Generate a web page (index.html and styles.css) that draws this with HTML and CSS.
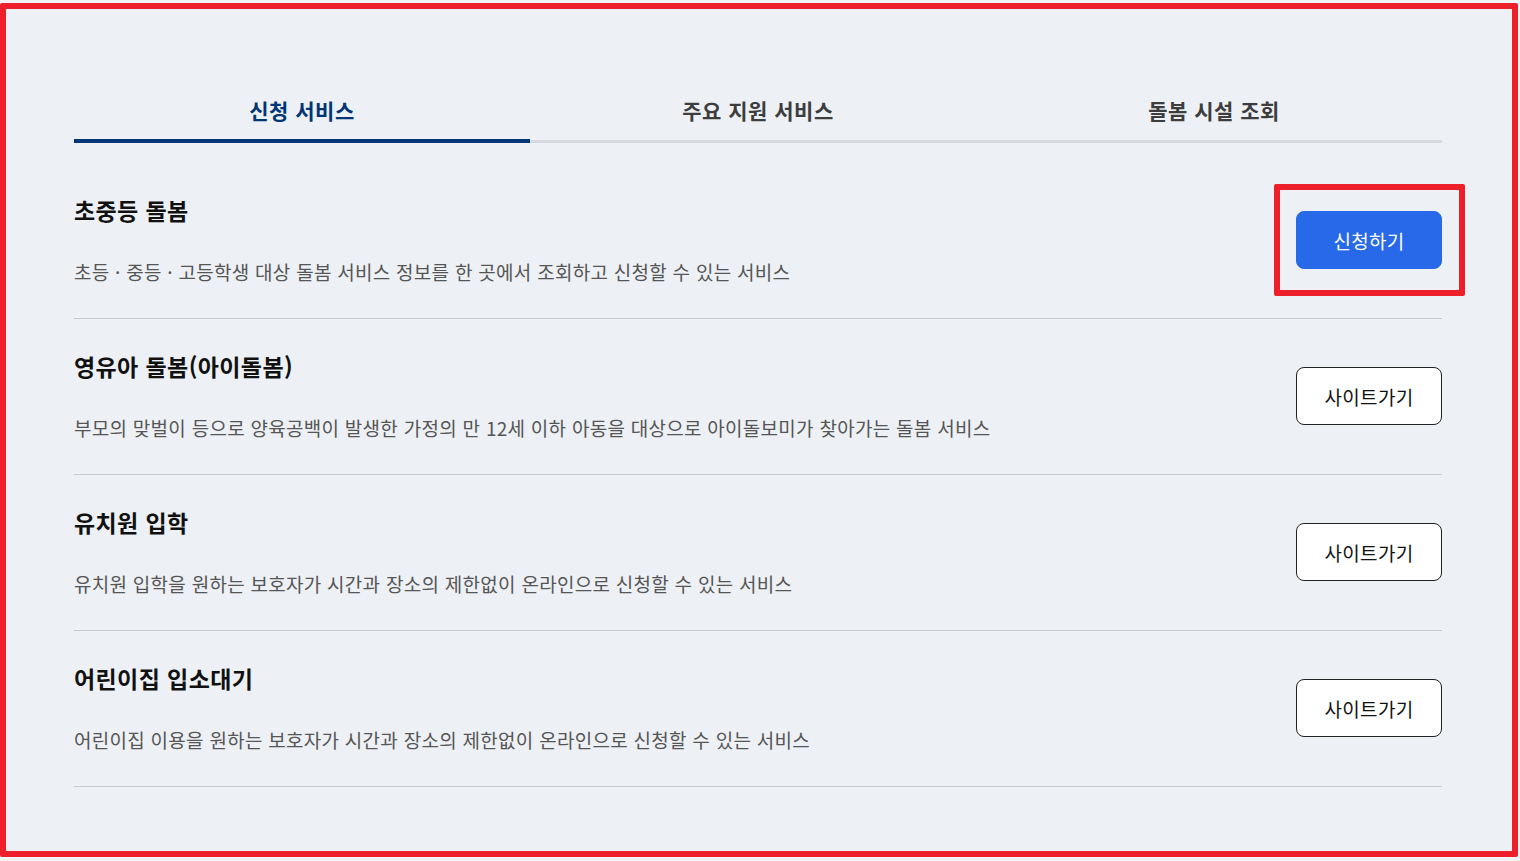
FILE: index.html
```html
<!DOCTYPE html>
<html lang="ko">
<head>
<meta charset="utf-8">
<title>돌봄 서비스</title>
<link rel="stylesheet" href="styles.css">
</head>
<body>
<div class="frame">
  <div class="content">
    <div class="tabs">
      <div class="tab active">신청 서비스</div>
      <div class="tab">주요 지원 서비스</div>
      <div class="tab">돌봄 시설 조회</div>
    </div>
    <ul class="list">
      <li class="item">
        <div class="info">
          <h3 class="title">초중등 돌봄</h3>
          <p class="desc">초등 · 중등 · 고등학생 대상 돌봄 서비스 정보를 한 곳에서 조회하고 신청할 수 있는 서비스</p>
        </div>
        <div class="btn-wrap">
          <a class="btn primary" href="#">신청하기</a>
          <span class="highlight"></span>
        </div>
      </li>
      <li class="item">
        <div class="info">
          <h3 class="title">영유아 돌봄(아이돌봄)</h3>
          <p class="desc">부모의 맞벌이 등으로 양육공백이 발생한 가정의 만 12세 이하 아동을 대상으로 아이돌보미가 찾아가는 돌봄 서비스</p>
        </div>
        <div class="btn-wrap"><a class="btn" href="#">사이트가기</a></div>
      </li>
      <li class="item">
        <div class="info">
          <h3 class="title">유치원 입학</h3>
          <p class="desc">유치원 입학을 원하는 보호자가 시간과 장소의 제한없이 온라인으로 신청할 수 있는 서비스</p>
        </div>
        <div class="btn-wrap"><a class="btn" href="#">사이트가기</a></div>
      </li>
      <li class="item">
        <div class="info">
          <h3 class="title">어린이집 입소대기</h3>
          <p class="desc">어린이집 이용을 원하는 보호자가 시간과 장소의 제한없이 온라인으로 신청할 수 있는 서비스</p>
        </div>
        <div class="btn-wrap"><a class="btn" href="#">사이트가기</a></div>
      </li>
    </ul>
  </div>
</div>
</body>
</html>
```

FILE: styles.css
```css
* { box-sizing: border-box; }
html, body {
  margin: 0;
  padding: 0;
  background: #f1f3f5;
  font-family: "Noto Sans CJK KR", "Noto Sans", sans-serif;
}
.frame {
  width: 1518px;
  height: 854px;
  margin-top: 3px;
  border: 6px solid #ec1f2b;
  border-radius: 2px;
  background: #edf0f4;
}
.content {
  padding: 86px 70px 0 68px;
}
.tabs {
  display: grid;
  grid-template-columns: repeat(3, 1fr);
}
.tab {
  text-align: center;
  font-size: 21px;
  letter-spacing: 0.5px;
  font-weight: 700;
  line-height: 30px;
  color: #3d3d3d;
  padding-bottom: 15px;
  border-bottom: 3px solid #d6d9dd;
}
.tab.active {
  color: #003675;
  padding-bottom: 14px;
  border-bottom: 4px solid #003675;
}
.list {
  list-style: none;
  margin: 20px 0 0;
  padding: 0;
}
.item {
  display: flex;
  align-items: center;
  justify-content: space-between;
  padding: 31px 0 32px;
  border-bottom: 1px solid #c8cacd;
}
.title {
  margin: 0;
  font-size: 23px;
  letter-spacing: 0.4px;
  font-weight: 700;
  line-height: 32px;
  color: #111;
}
.desc {
  margin: 32px 0 0;
  font-size: 19px;
  letter-spacing: 0.27px;
  line-height: 28px;
  color: #555;
}
.btn-wrap {
  position: relative;
}
.btn {
  display: flex;
  align-items: center;
  justify-content: center;
  width: 146px;
  height: 58px;
  border: 1px solid #222;
  border-radius: 8px;
  background: #fff;
  color: #111;
  font-size: 19px;
  letter-spacing: 0.3px;
  text-decoration: none;
}
.btn.primary {
  background: #2769e8;
  border-color: #2769e8;
  color: #fff;
}
.highlight {
  position: absolute;
  left: -22px;
  top: -27px;
  right: -23px;
  bottom: -27px;
  border: 6px solid #ec1f2b;
  border-radius: 2px;
  pointer-events: none;
}
```
